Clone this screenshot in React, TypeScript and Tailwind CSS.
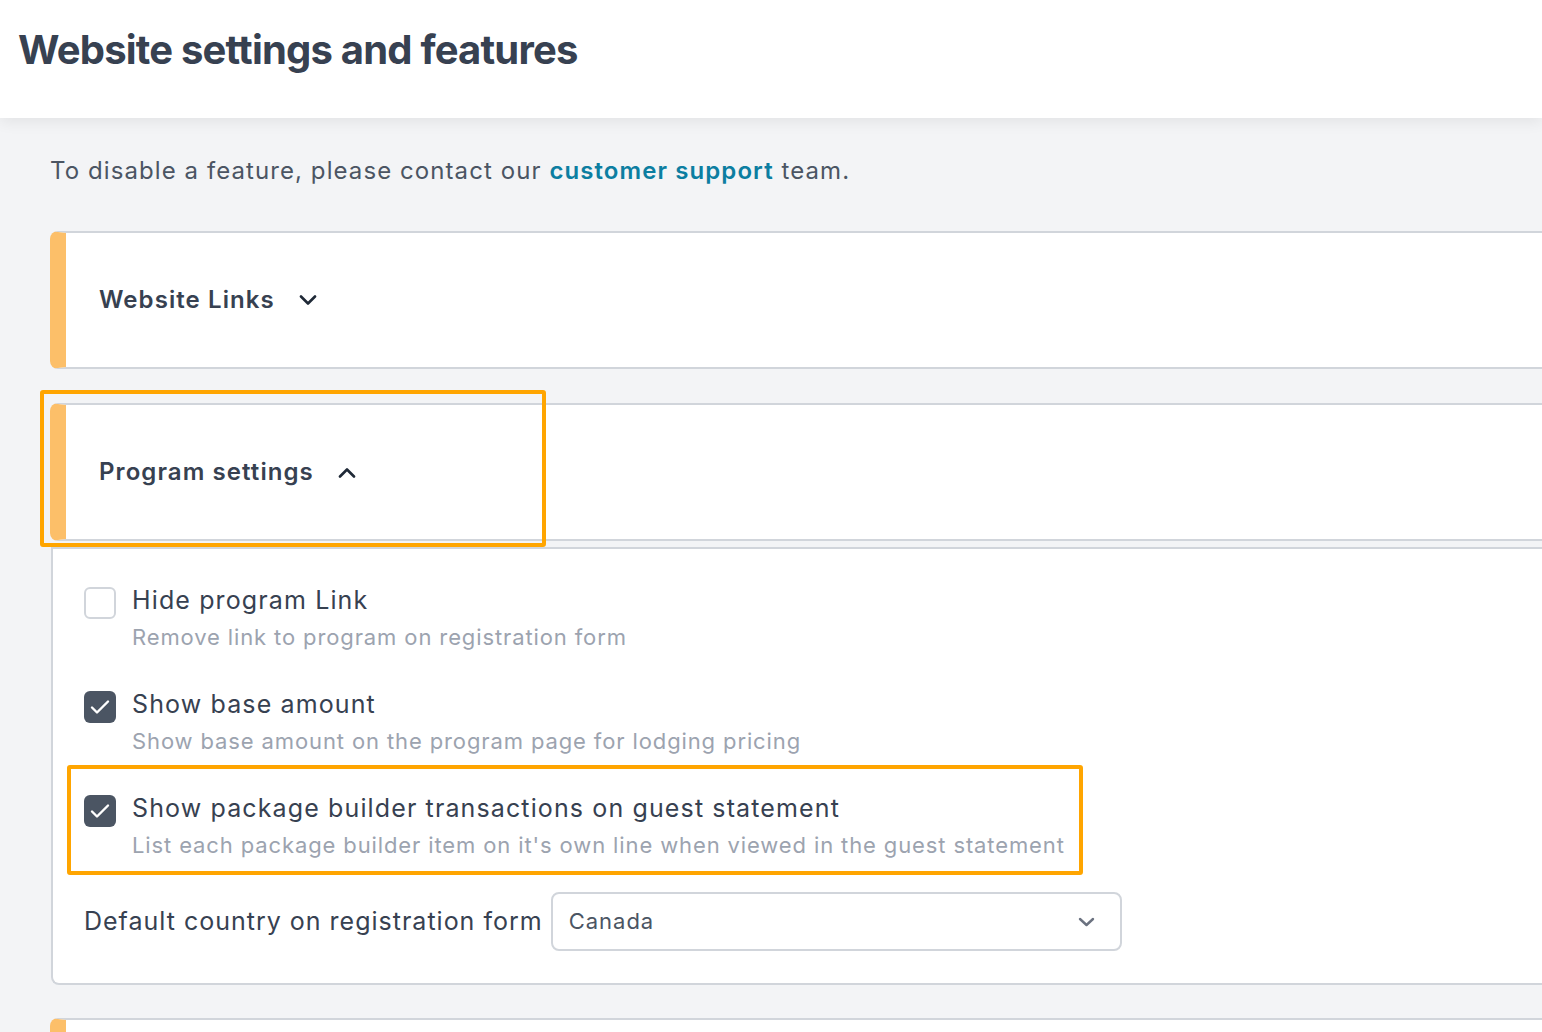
interface OptionProps {
  checked: boolean;
  label: string;
  description: string;
}

function Chevron({ up, className }: { up?: boolean; className?: string }) {
  return (
    <svg width="18" height="11" viewBox="0 0 18 11" fill="none" className={className}>
      <path
        d={up ? 'M2 9.5 9 2.5l7 7' : 'M2 1.5l7 7 7-7'}
        stroke="currentColor"
        strokeWidth="2.6"
        strokeLinecap="round"
        strokeLinejoin="round"
      />
    </svg>
  );
}

function OptionRow({ checked, label, description }: OptionProps) {
  return (
    <div className="flex items-start gap-4">
      {checked ? (
        <span className="mt-[5px] flex h-8 w-8 shrink-0 items-center justify-center rounded-md bg-[#4b5563]">
          <svg width="20" height="16" viewBox="0 0 20 16" fill="none">
            <path d="M2 8.5l5 5L18 2.5" stroke="white" strokeWidth="2.4" strokeLinecap="round" strokeLinejoin="round" />
          </svg>
        </span>
      ) : (
        <span className="mt-[5px] h-8 w-8 shrink-0 rounded-md border-2 border-[#d1d5db] bg-white"></span>
      )}
      <div>
        <p className="text-[25px] leading-[36px] tracking-[0.045em] text-[#374151]">{label}</p>
        <p className="text-[22px] leading-[38px] tracking-[0.04em] text-[#9ca3af]">{description}</p>
      </div>
    </div>
  );
}

function SectionCard({ title, open }: { title?: string; open?: boolean }) {
  return (
    <div className="flex h-[138px] items-center rounded-l-lg border-y-2 border-l-[16px] border-[#d1d5db] border-l-[#fcbf69] bg-white pl-[33px]">
      {title && (
        <>
          <span className="text-[24px] font-semibold tracking-[0.045em] text-[#374151]">{title}</span>
          <Chevron up={open} className="ml-[24px] text-[#1f2937]" />
        </>
      )}
    </div>
  );
}

export default function App() {
  return (
    <div
      className="h-screen overflow-hidden bg-[#f3f4f6]"
      style={{ fontFamily: 'Inter, "Noto Sans", sans-serif' }}
    >
      {/* header */}
      <div className="relative z-10 flex h-[118px] items-center bg-white pl-[18px] shadow-[0_4px_14px_rgba(0,0,0,0.07)]">
        <h1 className="-mt-[18px] text-[40px] font-bold tracking-[-0.02em] text-[#374151]">
          Website settings and features
        </h1>
      </div>

      <div className="-mr-10 pl-[50px] pt-[37px]">
        <p className="text-[24px] leading-[32px] tracking-[0.045em] text-[#4b5563]">
          To disable a feature, please contact our{' '}
          <span className="font-semibold text-[#0c7ea1]">customer support</span> team.
        </p>

        <div className="mt-[44px]">
          <SectionCard title="Website Links" />
        </div>

        <div className="relative mt-[34px]">
          <SectionCard title="Program settings" open />
          <div className="pointer-events-none absolute left-[-10px] top-[-13px] h-[157px] w-[506px] rounded-[3px] border-4 border-[#ffa500]"></div>
        </div>

        {/* expanded panel */}
        <div className="ml-px mt-[6px] rounded-bl-lg border-2 border-r-0 border-[#d1d5db] bg-white pb-[32px] pl-[31px] pt-[33px]">
          <div className="flex flex-col gap-[30px]">
            <OptionRow checked={false} label="Hide program Link" description="Remove link to program on registration form" />
            <OptionRow checked label="Show base amount" description="Show base amount on the program page for lodging pricing" />
            <div className="relative">
              <OptionRow
                checked
                label="Show package builder transactions on guest statement"
                description="List each package builder item on it's own line when viewed in the guest statement"
              />
              <div className="pointer-events-none absolute left-[-17px] top-[-25px] h-[110px] w-[1016px] rounded-[3px] border-4 border-[#ffa500]"></div>
            </div>
          </div>

          <div className="mt-[28px] flex items-center gap-2">
            <span className="text-[25px] tracking-[0.04em] text-[#374151]">Default country on registration form</span>
            <div className="flex h-[59px] w-[571px] items-center justify-between rounded-lg border-2 border-[#d1d5db] bg-white pl-4 pr-[25px]">
              <span className="text-[22px] tracking-[0.045em] text-[#4b5563]">Canada</span>
              <svg width="17" height="10" viewBox="0 0 17 10" fill="none" className="text-[#6b7280]">
                <path d="M2 2l6.5 6L15 2" stroke="currentColor" strokeWidth="2.4" strokeLinecap="round" strokeLinejoin="round" />
              </svg>
            </div>
          </div>
        </div>

        <div className="mt-[33px]">
          <SectionCard />
        </div>
      </div>
    </div>
  );
}
